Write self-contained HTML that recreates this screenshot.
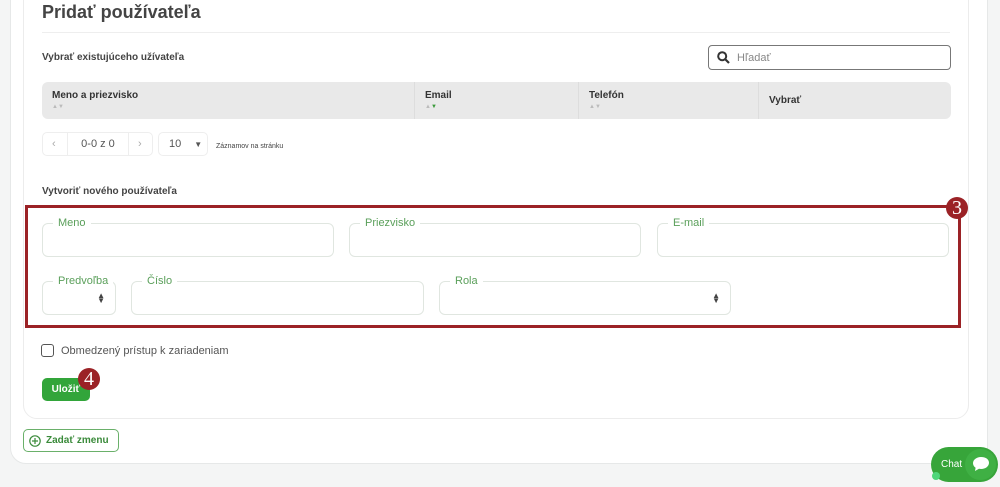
<!DOCTYPE html>
<html><head><meta charset="utf-8"><style>
*{box-sizing:border-box;margin:0;padding:0}
body{width:1000px;height:487px;overflow:hidden;background:#f4f5f5;font-family:"Liberation Sans",sans-serif;position:relative;color:#333}
.abs{position:absolute}
.outer{left:10px;top:-20px;width:978px;height:484px;background:#fff;border:1px solid #e6e8e8;border-radius:16px}
.inner{left:23px;top:-20px;width:946px;height:439px;background:#fff;border:1px solid #ececec;border-radius:14px}
h1{position:absolute;left:42px;top:2px;font-size:18px;font-weight:bold;color:#444}
.hr{left:42px;top:32px;width:908px;height:1px;background:#eee}
.lbl{font-size:10px;font-weight:bold;color:#444}
.search{left:708px;top:45px;width:243px;height:25px;border:1px solid #777;border-radius:4px;font-size:11px;color:#888;padding:6px 0 0 28px}
.th{top:82px;left:42px;width:909px;height:37px;background:#e9e9e9;border-radius:6px}
.col{position:absolute;top:0;height:37px;border-left:1px solid #ddd;font-size:10px;font-weight:bold;color:#333;padding:8px 0 0 10px}
.sm{display:block;font-size:6px;color:#bbb;margin-top:3px}
.pg{top:132px;height:24px;border:1px solid #eee;border-radius:5px;font-size:11px;color:#555}
.red{left:25px;top:205px;width:936px;height:123px;border:3px solid #9b2226}
.badge{width:22px;height:22px;border-radius:50%;background:#9b2226;color:#fff;font-family:"Liberation Serif",serif;font-size:20px;text-align:center;line-height:22px}
.f{height:34px;border:1px solid #e0e6e0;border-radius:6px}
.fl{position:absolute;top:-7px;left:10px;background:#fff;padding:0 5px;font-size:11px;color:#5a9f5a}
.arr{position:absolute;right:10px;top:11px;font-size:8px;color:#444;line-height:5px}
</style></head><body>
<div class="abs outer"></div>
<div class="abs inner"></div>
<h1>Pridať používateľa</h1>
<div class="abs hr"></div>
<div class="abs lbl" style="left:42px;top:52px">Vybrať existujúceho užívateľa</div>
<div class="abs search"><svg class="abs" style="left:8px;top:5px" width="13" height="13" viewBox="0 0 13 13"><circle cx="5.2" cy="5.2" r="4" fill="none" stroke="#333" stroke-width="2"/><path d="M8 8l4 4" stroke="#333" stroke-width="2.2"/></svg>Hľadať</div>
<div class="abs th">
<div class="col" style="left:0;border:none">Meno a priezvisko<span class="sm">▲▼</span></div>
<div class="col" style="left:372px">Email<span class="sm">▲<span style="color:#3a9a3a">▼</span></span></div>
<div class="col" style="left:536px">Telefón<span class="sm">▲▼</span></div>
<div class="col" style="left:716px;padding-top:13px">Vybrať</div>
</div>
<div class="abs pg" style="left:42px;width:111px"><span class="abs" style="left:9px;top:5px;color:#aaa">‹</span><div class="abs" style="left:24px;top:-1px;width:62px;height:24px;border:1px solid #eee;text-align:center;padding-top:5px">0-0 z 0</div><span class="abs" style="left:95px;top:5px;color:#aaa">›</span></div>
<div class="abs pg" style="left:158px;width:50px;padding:5px 0 0 10px">10 <span style="font-size:8px;margin-left:10px">▼</span></div>
<div class="abs" style="left:216px;top:143px;font-size:7px;color:#444">Záznamov na stránku</div>
<div class="abs lbl" style="left:42px;top:186px">Vytvoriť nového používateľa</div>
<div class="abs red"></div>
<div class="abs badge" style="left:946px;top:197px">3</div>
<div class="abs f" style="left:42px;top:223px;width:292px"><span class="fl">Meno</span></div>
<div class="abs f" style="left:349px;top:223px;width:292px"><span class="fl">Priezvisko</span></div>
<div class="abs f" style="left:657px;top:223px;width:292px"><span class="fl">E-mail</span></div>
<div class="abs f" style="left:42px;top:281px;width:74px"><span class="fl">Predvoľba</span><span class="arr">▲<br>▼</span></div>
<div class="abs f" style="left:131px;top:281px;width:293px"><span class="fl">Číslo</span></div>
<div class="abs f" style="left:439px;top:281px;width:292px"><span class="fl">Rola</span><span class="arr">▲<br>▼</span></div>
<div class="abs" style="left:41px;top:344px;width:13px;height:13px;border:1.5px solid #555;border-radius:3px"></div>
<div class="abs" style="left:61px;top:345px;font-size:11px;color:#555">Obmedzený prístup k zariadeniam</div>
<div class="abs" style="left:42px;top:378px;width:48px;height:23px;background:#32a53a;border-radius:5px;color:#fff;font-size:10px;font-weight:bold;text-align:center;line-height:23px">Uložiť</div>
<div class="abs badge" style="left:78px;top:368px">4</div>
<div class="abs" style="left:23px;top:429px;width:96px;height:23px;border:1px solid #6ab06a;border-radius:5px;color:#3a8a3a;font-size:10px;font-weight:bold;padding:5px 0 0 22px">Zadať zmenu<svg class="abs" style="left:5px;top:5px" width="12" height="12" viewBox="0 0 12 12"><circle cx="6" cy="6" r="5.2" fill="none" stroke="#3a8a3a" stroke-width="1.2"/><path d="M6 3v6M3 6h6" stroke="#3a8a3a" stroke-width="1.2"/></svg></div>
<div class="abs" style="left:931px;top:447px;width:67px;height:35px;background:#37a53a;border-radius:18px;color:#fff;font-size:10px;padding:12px 0 0 10px">Chat<div class="abs" style="left:34px;top:2px;width:31px;height:31px;border-radius:50%;background:#3fb044"></div><svg class="abs" style="left:41px;top:9px" width="18" height="16" viewBox="0 0 18 16"><path d="M9 1C4.5 1 1 3.8 1 7.2c0 1.8 1 3.4 2.6 4.5L3 15l4-2.2c.6.1 1.3.2 2 .2 4.5 0 8-2.8 8-6.3S13.5 1 9 1z" fill="#fff"/></svg></div>
<div class="abs" style="left:932px;top:472px;width:8px;height:8px;border-radius:50%;background:#4fd67a"></div>
</body></html>
